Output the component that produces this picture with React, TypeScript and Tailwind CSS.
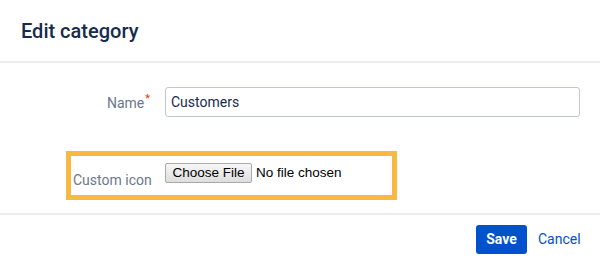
export default function App() {
  return (
    <div className="w-[600px] h-[265px] bg-white flex flex-col font-['Roboto',_'Liberation_Sans',_sans-serif]">
      {/* Header */}
      <div className="h-[63px] border-b-2 border-[#ebecf0] pl-[21px] pt-[18px]">
        <h2 className="text-[20px] leading-[26px] font-medium text-[#172b4d]">Edit category</h2>
      </div>

      {/* Body */}
      <div className="flex-1 flex flex-col pt-[24px]">
        <div className="flex items-center">
          <label className="w-[150px] pt-[2px] text-right text-[14px] text-[#6b778c]">
            Name<sup className="text-[#de350b] text-[11px] ml-[1px]">*</sup>
          </label>
          <input
            defaultValue="Customers"
            className="ml-[15px] w-[415px] h-[30px] border border-[#c1c7d0] rounded-[3px] px-[5px] text-[14px] text-[#172b4d] outline-none"
          />
        </div>

        <div className="mt-[34px] ml-[66px] w-[331px] h-[49px] border-[5px] border-[#f9b941] flex items-start">
          <span className="ml-[2px] mt-[15px] w-[92px] text-[14px] leading-[18px] text-[#6b778c]">Custom icon</span>
          <div className="mt-[7px] flex items-center font-['Liberation_Sans',_Arial,_sans-serif] text-[13.5px] text-black">
            <button className="w-[87px] h-[20px] border border-[#a9a9a9] rounded-[2px] bg-gradient-to-b from-[#f6f6f6] to-[#dedede] leading-[18px]">
              Choose File
            </button>
            <span className="ml-[4px]">No file chosen</span>
          </div>
        </div>
      </div>

      {/* Footer */}
      <div className="h-[52px] border-t-2 border-[#ebecf0] flex items-start justify-end pr-[20px] pt-[10px]">
        <button className="w-[51px] h-[29px] rounded-[3px] bg-[#0052cc] text-white text-[14px] font-bold">Save</button>
        <button className="ml-[11px] w-[42px] h-[29px] text-left text-[14px] text-[#0052cc]">Cancel</button>
      </div>
    </div>
  );
}
